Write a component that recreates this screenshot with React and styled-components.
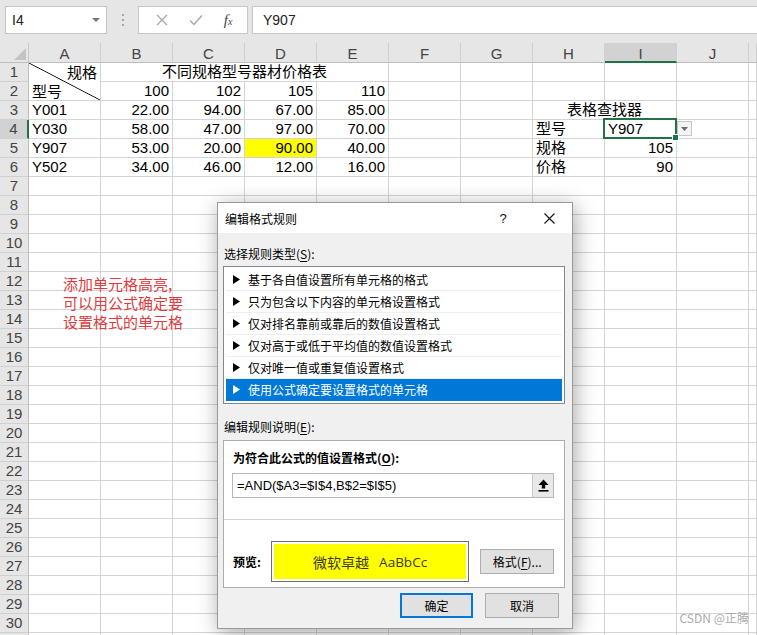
import React from 'react';
import styled, { createGlobalStyle } from 'styled-components';

const GlobalStyle = createGlobalStyle`
  html, body { margin: 0; padding: 0; }
  body {
    width: 757px; height: 635px; overflow: hidden; background: #fff;
    font-family: "Liberation Sans", "Noto Sans CJK SC", sans-serif;
  }
`;

const GREEN = '#217346';
const GRID = '#d4d4d4';

const Page = styled.div`
  position: relative;
  width: 757px;
  height: 635px;
  overflow: hidden;
  display: flex;
  flex-direction: column;
  background: #fff;
`;

/* ---------- formula bar ---------- */
const FormulaBar = styled.div`
  flex: none;
  height: 43px;
  box-sizing: border-box;
  padding: 6px 0 0 5px;
  background: #e6e6e6;
  display: flex;
  align-items: flex-start;
`;

const NameBox = styled.div`
  width: 102px;
  height: 28px;
  box-sizing: border-box;
  background: #fff;
  border: 1px solid #c6c6c6;
  display: flex;
  align-items: center;
  justify-content: space-between;
  padding: 0 6px 0 6px;
  font-size: 14px;
  color: #222;
`;

const Caret = styled.span`
  width: 0; height: 0;
  border-left: 4px solid transparent;
  border-right: 4px solid transparent;
  border-top: 4px solid #777;
`;

const Dots = styled.div`
  width: 31px;
  height: 28px;
  display: flex;
  flex-direction: column;
  align-items: center;
  justify-content: center;
  gap: 3px;
  & > i { width: 2px; height: 2px; background: #a6a6a6; display: block; }
`;

const FxBox = styled.div`
  width: 110px;
  height: 28px;
  box-sizing: border-box;
  background: #fff;
  border: 1px solid #c6c6c6;
  display: flex;
  align-items: center;
  justify-content: space-around;
  padding: 0 4px 0 6px;
`;

const FxText = styled.span`
  font-family: "Liberation Serif", serif;
  font-style: italic;
  font-size: 15px;
  color: #444;
  & sub { font-size: 10px; vertical-align: baseline; }
`;

const FormulaInput = styled.div`
  flex: 1;
  margin-left: 4px;
  margin-right: -2px;
  height: 28px;
  box-sizing: border-box;
  background: #fff;
  border: 1px solid #c6c6c6;
  display: flex;
  align-items: center;
  padding-left: 10px;
  font-size: 14px;
  color: #222;
`;

/* ---------- sheet ---------- */
const Sheet = styled.div`
  position: relative;
  flex: 1;
  display: grid;
  grid-template-columns: 29px repeat(10, 72px) 1fr;
  grid-template-rows: 20px;
  grid-auto-rows: 19px;
`;

const Corner = styled.div`
  grid-column: 1; grid-row: 1;
  background: #e6e6e6;
  border-right: 1px solid #c8c8c8;
  border-bottom: 1px solid #bdbdbd;
  box-sizing: border-box;
  position: relative;
  &::after {
    content: '';
    position: absolute;
    right: 2px; bottom: 2px;
    width: 0; height: 0;
    border-left: 12px solid transparent;
    border-bottom: 12px solid #c4c4c4;
  }
`;

const ColHeader = styled.div`
  grid-column: ${p => p.$col};
  grid-row: 1;
  box-sizing: border-box;
  background: ${p => (p.$active ? '#d2d2d2' : '#e6e6e6')};
  border-right: 1px solid #d0d0d0;
  border-bottom: ${p => (p.$active ? `2px solid ${GREEN}` : '1px solid #bdbdbd')};
  text-align: center;
  font-size: 15px;
  line-height: 19px;
  padding-top: 1px;
  color: #444;
`;

const RowHeader = styled.div`
  grid-column: 1;
  grid-row: ${p => p.$row};
  box-sizing: border-box;
  background: ${p => (p.$active ? '#d2d2d2' : '#e6e6e6')};
  border-right: ${p => (p.$active ? `2px solid ${GREEN}` : '1px solid #bdbdbd')};
  border-bottom: 1px solid #d0d0d0;
  text-align: center;
  font-size: 15px;
  line-height: 18px;
  color: #444;
`;

const Cell = styled.div`
  grid-column: ${p => p.$col} / span ${p => p.$colSpan || 1};
  grid-row: ${p => p.$row} / span ${p => p.$rowSpan || 1};
  position: relative;
  box-sizing: border-box;
  border-right: 1px solid ${GRID};
  border-bottom: 1px solid ${GRID};
  background: ${p => p.$bg || '#fff'};
  padding: 0 3px;
  font-size: 15px;
  line-height: 18px;
  color: #000;
  white-space: nowrap;
  text-align: ${p => p.$align || 'left'};
`;

const DiagCell = styled(Cell)`
  display: flex;
  flex-direction: column;
  justify-content: space-between;
  line-height: 19px;
  background: linear-gradient(to top right, transparent calc(50% - 0.8px), #000 50%, transparent calc(50% + 0.8px)), #fff;
`;

const Selected = styled(Cell)`
  z-index: 2;
  &::before {
    content: '';
    position: absolute;
    left: -2px; top: -2px; right: -1px; bottom: -1px;
    border: 2px solid ${GREEN};
    pointer-events: none;
  }
  &::after {
    content: '';
    position: absolute;
    right: -3px; bottom: -3px;
    width: 5px; height: 5px;
    background: ${GREEN};
    border: 1px solid #fff;
  }
`;

const DropBtn = styled.div`
  position: absolute;
  left: 72px;
  top: 1px;
  width: 15px;
  height: 15px;
  box-sizing: border-box;
  border: 1px solid #c6c6c6;
  background: #f4f4f4;
  display: flex;
  align-items: center;
  justify-content: center;
`;

const Note = styled.div`
  grid-column: 2 / span 3;
  grid-row: 13 / span 3;
  z-index: 1;
  padding: 2px 0 0 34px;
  font-family: "Noto Sans CJK SC", sans-serif;
  font-size: 15px;
  line-height: 19px;
  color: #e03b3d;
  pointer-events: none;
  white-space: nowrap;
`;

const Watermark = styled.div`
  position: absolute;
  right: 8px;
  bottom: 9px;
  font-family: "Noto Sans CJK SC", sans-serif;
  font-size: 12px;
  color: rgba(160, 160, 160, 0.9);
  z-index: 5;
`;

/* ---------- dialog ---------- */
const Dialog = styled.div`
  position: absolute;
  left: 217px;
  top: 202px;
  width: 356px;
  box-sizing: border-box;
  background: #f0f0f0;
  border: 1px solid #9a9a9a;
  box-shadow: 2px 4px 20px rgba(0, 0, 0, 0.35);
  font-family: "Noto Sans CJK SC", sans-serif;
  font-size: 12px;
  color: #000;
  z-index: 10;
`;

const TitleBar = styled.div`
  height: 30px;
  background: #fff;
  display: flex;
  align-items: center;
  padding-left: 7px;
`;

const TitleText = styled.div`
  flex: 1;
  font-size: 12px;
`;

const TitleBtn = styled.div`
  width: 46px;
  height: 30px;
  display: flex;
  align-items: center;
  justify-content: center;
  font-size: 13px;
  font-family: "Liberation Sans", sans-serif;
  color: #111;
`;

const Body = styled.div`
  padding: 13px 7px 10px 5px;
  display: flex;
  flex-direction: column;
`;

const Label = styled.div`
  line-height: 16px;
  height: 16px;
  padding-left: 1px;
  margin-top: ${p => p.$mt || 0}px;
  font-weight: ${p => (p.$bold ? 700 : 400)};
  white-space: nowrap;
`;

const ListBox = styled.div`
  margin-top: 4px;
  background: #fff;
  border: 1px solid #828790;
  padding: 2px;
  display: flex;
  flex-direction: column;
`;

const ListItem = styled.div`
  height: 22px;
  box-sizing: border-box;
  border-bottom: 1px solid ${p => (p.$sel ? '#0078d7' : '#eeeeee')};
  background: ${p => (p.$sel ? '#0078d7' : 'transparent')};
  color: ${p => (p.$sel ? '#fff' : '#000')};
  display: flex;
  align-items: center;
  gap: 8px;
  padding-left: 7px;
  line-height: 21px;
`;

const Group = styled.div`
  margin-top: 5px;
  background: #fff;
  border: 1px solid #adadad;
  padding: 9px 10px 5px 8px;
  display: flex;
  flex-direction: column;
`;

const FormulaField = styled.div`
  margin-top: 7px;
  height: 25px;
  box-sizing: border-box;
  border: 1px solid #b8b8b8;
  display: flex;
  align-items: stretch;
`;

const FieldText = styled.div`
  flex: 1;
  display: flex;
  align-items: center;
  padding-left: 4px;
  font-family: "Liberation Sans", sans-serif;
  font-size: 13px;
`;

const RefButton = styled.div`
  width: 20px;
  background: #e8e8e8;
  border-left: 1px solid #c8c8c8;
  display: flex;
  align-items: center;
  justify-content: center;
`;

const Separator = styled.div`
  height: 1px;
  background: #d5d5d5;
  margin: 21px -10px 21px -8px;
`;

const PreviewRow = styled.div`
  display: flex;
  align-items: center;
`;

const PreviewLabel = styled.div`
  width: 38px;
  padding-left: 1px;
  font-weight: 700;
`;

const PreviewBox = styled.div`
  width: 200px;
  height: 41px;
  box-sizing: border-box;
  border: 1px solid #6e6e6e;
  background: #fff;
  padding: 2px;
`;

const PreviewFill = styled.div`
  height: 100%;
  background: #ffff00;
  display: flex;
  align-items: center;
  justify-content: center;
  gap: 10px;
  font-size: 14px;
  color: #3a3a2a;
  & > span:last-child { font-family: "Open Sans", "Liberation Sans", sans-serif; font-size: 13.5px; }
`;

const Button = styled.div`
  width: ${p => p.$w || 74}px;
  height: 25px;
  box-sizing: border-box;
  background: #e1e1e1;
  border: ${p => (p.$primary ? '2px solid #0078d7' : '1px solid #adadad')};
  display: flex;
  align-items: center;
  justify-content: center;
  margin-left: ${p => p.$ml || 0}px;
  white-space: nowrap;
`;

const ButtonRow = styled.div`
  margin-top: 5px;
  display: flex;
  justify-content: flex-end;
  gap: 12px;
  padding-right: 6px;
`;

const U = styled.span`
  text-decoration: underline;
  text-underline-offset: 2px;
`;

/* ---------- data ---------- */
const COLS = ['A', 'B', 'C', 'D', 'E', 'F', 'G', 'H', 'I', 'J', ''];
const ROWS = 31;
const LABELED_ROWS = 30;

const cells = [
  { c: 3, r: 1, colSpan: 4, v: '不同规格型号器材价格表', align: 'center' },
  { c: 3, r: 2, v: '100', align: 'right' },
  { c: 4, r: 2, v: '102', align: 'right' },
  { c: 5, r: 2, v: '105', align: 'right' },
  { c: 6, r: 2, v: '110', align: 'right' },
  ...[
    ['Y001', '22.00', '94.00', '67.00', '85.00'],
    ['Y030', '58.00', '47.00', '97.00', '70.00'],
    ['Y907', '53.00', '20.00', '90.00', '40.00'],
    ['Y502', '34.00', '46.00', '12.00', '16.00'],
  ].flatMap((row, i) =>
    row.map((v, j) => ({
      c: 2 + j,
      r: 3 + i,
      v,
      align: j === 0 ? 'left' : 'right',
      bg: i === 2 && j === 3 ? '#ffff00' : undefined,
    }))
  ),
  { c: 9, r: 3, colSpan: 2, v: '表格查找器', align: 'center' },
  { c: 9, r: 4, v: '型号' },
  { c: 9, r: 5, v: '规格' },
  { c: 10, r: 5, v: '105', align: 'right' },
  { c: 9, r: 6, v: '价格' },
  { c: 10, r: 6, v: '90', align: 'right' },
];

const covered = new Set();
cells.forEach(cl => {
  for (let k = 0; k < (cl.colSpan || 1); k++) covered.add(`${cl.c + k}-${cl.r}`);
});
['2-1', '2-2', '10-4'].forEach(k => covered.add(k));

const ITEMS = [
  '基于各自值设置所有单元格的格式',
  '只为包含以下内容的单元格设置格式',
  '仅对排名靠前或靠后的数值设置格式',
  '仅对高于或低于平均值的数值设置格式',
  '仅对唯一值或重复值设置格式',
  '使用公式确定要设置格式的单元格',
];

const Arrow = ({ color }) => (
  <svg width="7" height="9" viewBox="0 0 7 9"><path d="M0 0 L7 4.5 L0 9 Z" fill={color} /></svg>
);

export default function App() {
  const filler = [];
  for (let r = 1; r <= ROWS; r++) {
    for (let c = 2; c <= 12; c++) {
      if (!covered.has(`${c}-${r}`)) filler.push(<Cell key={`f${c}-${r}`} $col={c} $row={r + 1} />);
    }
  }

  return (
    <Page>
      <GlobalStyle />
      <FormulaBar>
        <NameBox>
          <span>I4</span>
          <Caret />
        </NameBox>
        <Dots><i /><i /><i /></Dots>
        <FxBox>
          <svg width="12" height="12" viewBox="0 0 12 12"><path d="M1 1 L11 11 M11 1 L1 11" stroke="#a8a8a8" strokeWidth="1.3" /></svg>
          <svg width="14" height="12" viewBox="0 0 14 12"><path d="M1 6.5 L5 10.5 L13 1.5" stroke="#a8a8a8" strokeWidth="1.4" fill="none" /></svg>
          <FxText>f<sub>x</sub></FxText>
        </FxBox>
        <FormulaInput>Y907</FormulaInput>
      </FormulaBar>

      <Sheet>
        <Corner />
        {COLS.map((l, i) => (
          <ColHeader key={l + i} $col={i + 2} $active={l === 'I'}>{l}</ColHeader>
        ))}
        {Array.from({ length: ROWS }, (_, i) => (
          <RowHeader key={i} $row={i + 2} $active={i + 1 === 4}>{i < LABELED_ROWS ? i + 1 : ''}</RowHeader>
        ))}

        <DiagCell $col={2} $row={2} $rowSpan={2}>
          <span style={{ textAlign: 'right' }}>规格</span>
          <span>型号</span>
        </DiagCell>

        {cells.map((cl, i) => (
          <Cell key={i} $col={cl.c} $row={cl.r + 1} $colSpan={cl.colSpan} $align={cl.align} $bg={cl.bg}>
            {cl.v}
          </Cell>
        ))}

        <Selected $col={10} $row={5}>
          Y907
          <DropBtn>
            <svg width="7" height="4" viewBox="0 0 7 4"><path d="M0 0 L7 0 L3.5 4 Z" fill="#6a6a6a" /></svg>
          </DropBtn>
        </Selected>

        {filler}

        <Note>
          添加单元格高亮,<br />可以用公式确定要<br />设置格式的单元格
        </Note>
      </Sheet>

      <Dialog>
        <TitleBar>
          <TitleText>编辑格式规则</TitleText>
          <TitleBtn>?</TitleBtn>
          <TitleBtn>
            <svg width="11" height="11" viewBox="0 0 11 11"><path d="M0.5 0.5 L10.5 10.5 M10.5 0.5 L0.5 10.5" stroke="#111" strokeWidth="1.1" /></svg>
          </TitleBtn>
        </TitleBar>
        <Body>
          <Label>选择规则类型(<U>S</U>):</Label>
          <ListBox>
            {ITEMS.map((t, i) => (
              <ListItem key={t} $sel={i === 5}>
                <Arrow color={i === 5 ? '#fff' : '#000'} />
                <span>{t}</span>
              </ListItem>
            ))}
          </ListBox>
          <Label $mt={15}>编辑规则说明(<U>E</U>):</Label>
          <Group>
            <Label $bold>为符合此公式的值设置格式(<U>O</U>):</Label>
            <FormulaField>
              <FieldText>=AND($A3=$I$4,B$2=$I$5)</FieldText>
              <RefButton>
                <svg width="11" height="13" viewBox="0 0 11 13">
                  <path d="M5.5 0.5 L10.5 6 L7.2 6 L7.2 9.5 L3.8 9.5 L3.8 6 L0.5 6 Z" fill="#000" />
                  <rect x="0.5" y="11" width="10" height="1.6" fill="#000" />
                </svg>
              </RefButton>
            </FormulaField>
            <Separator />
            <PreviewRow>
              <PreviewLabel>预览:</PreviewLabel>
              <PreviewBox>
                <PreviewFill>
                  <span>微软卓越</span>
                  <span>AaBbCc</span>
                </PreviewFill>
              </PreviewBox>
              <Button $ml={11}>格式(<U>F</U>)...</Button>
            </PreviewRow>
          </Group>
          <ButtonRow>
            <Button $primary $w={73}>确定</Button>
            <Button>取消</Button>
          </ButtonRow>
        </Body>
      </Dialog>

      <Watermark>CSDN @正腾</Watermark>
    </Page>
  );
}
